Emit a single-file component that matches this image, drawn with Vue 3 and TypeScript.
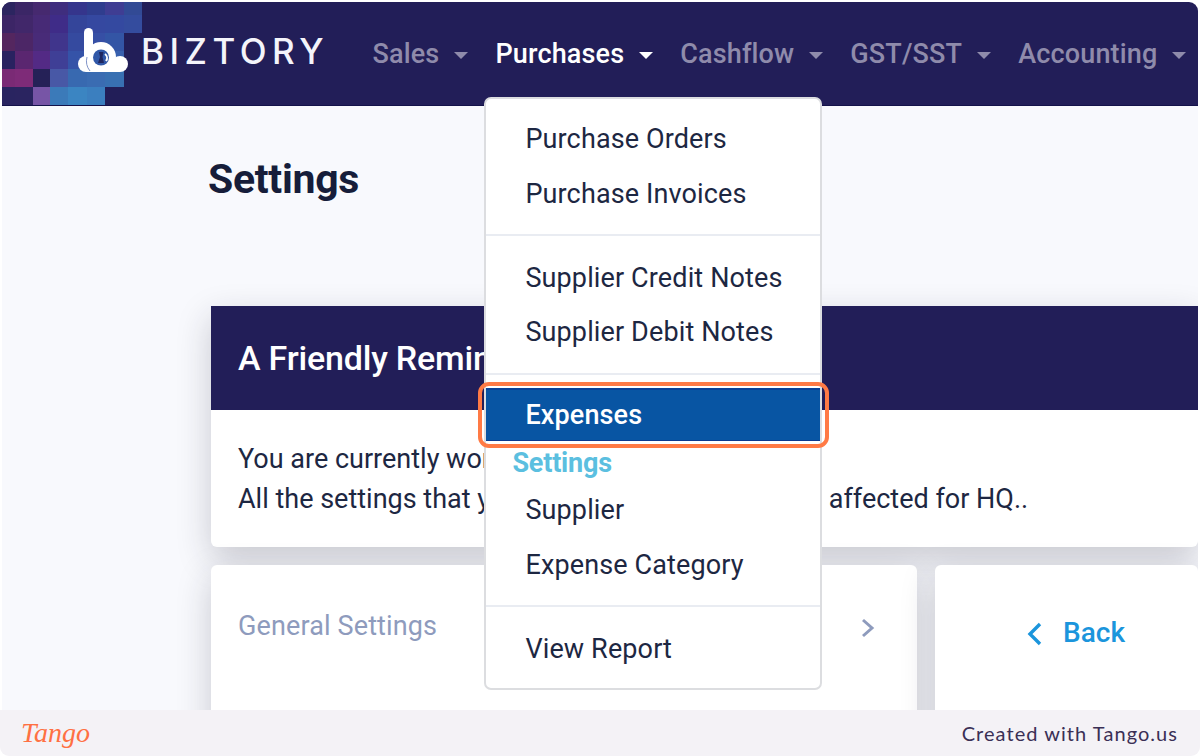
<script setup lang="ts">
interface MenuEntry {
  label: string
  kind?: 'active' | 'heading' | 'divider'
}

const navItems = ['Sales', 'Purchases', 'Cashflow', 'GST/SST', 'Accounting']

const mosaic = [
  '#2c2560', '#3b2666', '#46296f', '#3f2d7e', '#35358c', '#2f3d8e', '#3f3d93', '#324a95',
  '#3c2566', '#41276a', '#472a76', '#3f2c88', '#34459a', '#3548a0', '#3449a0', '#344c9e',
  '#54265f', '#4c2666', '#482b78', '#40358c', '#354a9f', '#364fa5', '#3355a5', 'transparent',
  '#292260', '#5a2670', '#532a85', '#3f3f96', '#3553a8', '#3457ad', '#3860ae', 'transparent',
  '#7a2a75', '#7e2b78', '#252157', '#4858a6', '#3869b0', '#3a6cb2', '#3870b2', 'transparent',
  '#292460', '#2a2460', '#7755a6', '#3b7ab9', '#3b85c2', '#3b7fbf', 'transparent', 'transparent',
]

const menu: MenuEntry[] = [
  { label: 'Purchase Orders' },
  { label: 'Purchase Invoices' },
  { label: '', kind: 'divider' },
  { label: 'Supplier Credit Notes' },
  { label: 'Supplier Debit Notes' },
  { label: '', kind: 'divider' },
  { label: 'Expenses', kind: 'active' },
  { label: 'Settings', kind: 'heading' },
  { label: 'Supplier' },
  { label: 'Expense Category' },
  { label: '', kind: 'divider' },
  { label: 'View Report' },
]
</script>

<template>
  <div class="frame">
    <header class="topbar">
      <div class="brand">
        <div class="mosaic">
          <span
            v-for="(color, index) in mosaic"
            :key="index"
            :style="{ background: color }"
          />
        </div>
        <svg class="brand-mark" width="54" height="50" viewBox="0 0 54 50">
          <g fill="#fff">
            <rect x="8" y="3" width="9" height="32" rx="4.5" />
            <circle cx="25" cy="32" r="15" />
            <circle cx="10" cy="39" r="8" />
            <circle cx="44" cy="39" r="8" />
            <rect x="10" y="38" width="34" height="9" />
          </g>
          <circle cx="25" cy="32.5" r="8" fill="#3158a8" />
          <path d="M23 27h4.5l-1 5 1.500 6h-6l2-6z" fill="#1f2660" />
          <path d="M29 29a5 5 0 0 1 1 7" fill="none" stroke="#fff" stroke-width="2" />
          <path d="M11 32a16 16 0 0 0 3 14" fill="none" stroke="#7f93c8" stroke-width="1" />
        </svg>
        <span class="brand-name">BIZTORY</span>
      </div>
      <nav class="nav">
        <div
          v-for="item in navItems"
          :key="item"
          class="nav-item"
          :class="{ open: item === 'Purchases' }"
        >
          <span>{{ item }}</span>
          <i class="caret" />
          <div v-if="item === 'Purchases'" class="dropdown">
            <template v-for="(entry, index) in menu" :key="index">
              <hr v-if="entry.kind === 'divider'" class="menu-divider">
              <div v-else-if="entry.kind === 'heading'" class="menu-heading">
                {{ entry.label }}
              </div>
              <div v-else class="menu-item" :class="{ active: entry.kind === 'active' }">
                {{ entry.label }}
                <span v-if="entry.kind === 'active'" class="ring" />
              </div>
            </template>
          </div>
        </div>
      </nav>
    </header>

    <main class="content">
      <h1 class="title">Settings</h1>

      <section class="card notice">
        <h2 class="notice-head">A Friendly Reminder</h2>
        <div class="notice-body">
          <p>You are currently working on HQ branch.</p>
          <p>All the settings that you change here will only get affected for HQ..</p>
        </div>
      </section>

      <div class="lower">
        <div class="card general">
          <span>General Settings</span>
          <svg width="16" height="22" viewBox="0 0 16 22">
            <path d="M3 3l9 8-9 8" fill="none" stroke="#8e9bbd" stroke-width="3" />
          </svg>
        </div>
        <div class="card back">
          <svg width="16" height="24" viewBox="0 0 16 24">
            <path d="M13 2L3 12l10 10" fill="none" stroke="#1b95dc" stroke-width="3.4" />
          </svg>
          <span>Back</span>
        </div>
      </div>
    </main>

    <footer class="footer">
      <span class="tango">Tango</span>
      <span class="credit">Created with Tango.us</span>
    </footer>
  </div>
</template>

<style>
body {
  background: #fff;
}
</style>

<style scoped>
.frame {
  width: 1200px;
  height: 756px;
  box-sizing: border-box;
  padding: 2px 2px 0;
  display: flex;
  flex-direction: column;
  overflow: hidden;
  background: #fff;
  font-family: Roboto, sans-serif;
}

.topbar {
  height: 103px;
  flex-shrink: 0;
  display: flex;
  background: #221e58;
  border-radius: 9px 9px 0 0;
  border-bottom: 1px solid #14124a;
  box-sizing: content-box;
  position: relative;
  z-index: 2;
}

.brand {
  width: 370.5px;
  flex-shrink: 0;
  display: flex;
  align-items: center;
  padding-left: 74px;
  box-sizing: border-box;
  position: relative;
}

.mosaic {
  position: absolute;
  left: 0;
  top: 0;
  display: grid;
  grid-template-columns: 13px 18px 17px 18px 19px 18px 19px 18px;
  grid-template-rows: 13px 18px 18px 18px 18px 18px;
  border-top-left-radius: 9px;
  overflow: hidden;
  filter: blur(0.4px);
}

.brand-mark {
  position: relative;
  margin-top: -7px;
  filter: blur(0.5px);
}

.brand-name {
  position: relative;
  margin-left: 11px;
  margin-top: -5px;
  color: #f4f4fa;
  font-family: Inter, sans-serif;
  font-size: 35px;
  letter-spacing: 5.5px;
  font-weight: 500;
}

.nav {
  display: flex;
  gap: 27px;
}

.nav-item {
  display: flex;
  align-items: center;
  gap: 15px;
  position: relative;
  color: #8f8bab;
  font-size: 27px;
  font-weight: 500;
  letter-spacing: 0.15px;
}

.nav-item.open {
  color: #fff;
}

.caret {
  width: 0;
  height: 0;
  margin-top: 3px;
  border-left: 7.5px solid transparent;
  border-right: 7.5px solid transparent;
  border-top: 7px solid currentColor;
}

.dropdown {
  position: absolute;
  left: -11px;
  top: 95px;
  width: 338px;
  height: 593px;
  box-sizing: border-box;
  padding: 12px 0;
  background: #fff;
  border: 2px solid #dcdde0;
  border-radius: 7px;
  z-index: 3;
}

.menu-item {
  height: 54.5px;
  line-height: 56.5px;
  padding-left: 39px;
  color: #1d2742;
  font-size: 27px;
  font-weight: 400;
  letter-spacing: 0.13px;
  position: relative;
}

.menu-item.active {
  height: 53px;
  line-height: 50px;
  color: #fff;
  font-weight: 500;
  background: #0855a3;
  border-top: 2px solid #0a4196;
  border-bottom: 1px solid #0a3a90;
  box-sizing: border-box;
}

.ring {
  position: absolute;
  inset: -8px -9px -8px -8px;
  border: 4px solid #ff7a45;
  border-radius: 11px;
}

.menu-heading {
  height: 30px;
  margin: 6px 0 5px;
  padding-left: 26px;
  line-height: 32px;
  color: #5bbfe0;
  font-size: 27px;
  font-weight: 700;
  letter-spacing: -0.2px;
}

.menu-divider {
  margin: 14px 0 13.5px;
  border: 0;
  border-top: 2px solid #e9ecf2;
}

.content {
  flex: 1;
  min-height: 0;
  overflow: hidden;
  padding: 0 0 0 209px;
  background: #f8f9fd;
}

.title {
  margin: 48px 0 0 -3px;
  height: 152px;
  color: #161d3a;
  font-size: 41px;
  line-height: 50px;
  font-weight: 700;
  letter-spacing: -0.3px;
}

.card {
  background: #fff;
  border-radius: 6px;
  box-shadow: 0 12px 34px rgba(30, 34, 50, 0.22);
}

.notice {
  border-radius: 0 0 6px 6px;
}

.notice-head {
  margin: 0;
  height: 104px;
  box-sizing: border-box;
  padding-left: 27px;
  background: #221e58;
  color: #fff;
  font-size: 34px;
  line-height: 104px;
  font-weight: 500;
  letter-spacing: -0.2px;
}

.notice-body {
  height: 137px;
  box-sizing: border-box;
  padding: 29px 0 0 27px;
  color: #1d2742;
  font-size: 27px;
  line-height: 40px;
}

.notice-body p {
  margin: 0;
}

.lower {
  display: grid;
  grid-template-columns: 706px 263px;
  gap: 18px;
  margin-top: 18px;
}

.general {
  height: 220px;
  display: flex;
  justify-content: space-between;
  align-items: flex-start;
  box-sizing: border-box;
  padding: 45px 41px 0 27px;
  color: #8e9bbd;
  font-size: 27px;
  line-height: 32px;
  letter-spacing: 0.13px;
}

.general svg {
  margin-top: 7px;
}

.back {
  height: 220px;
  display: flex;
  justify-content: center;
  align-items: flex-start;
  gap: 20px;
  box-sizing: border-box;
  padding: 51px 0 0 19px;
  color: #1b95dc;
  font-size: 28px;
  line-height: 34px;
  font-weight: 500;
}

.back svg {
  margin-top: 6px;
}

.footer {
  height: 46px;
  flex-shrink: 0;
  margin: 0 -2px;
  display: flex;
  justify-content: space-between;
  align-items: center;
  padding: 0 22px 0 21px;
  background: #f4f2f6;
  border-radius: 0 0 9px 9px;
  position: relative;
  z-index: 1;
}

.tango {
  color: #ff7043;
  font-family: "Liberation Serif", serif;
  font-style: italic;
  font-size: 28px;
  line-height: 46px;
}

.credit {
  color: #3a2f55;
  font-family: Lato, sans-serif;
  font-size: 20px;
  letter-spacing: 1.05px;
}
</style>
